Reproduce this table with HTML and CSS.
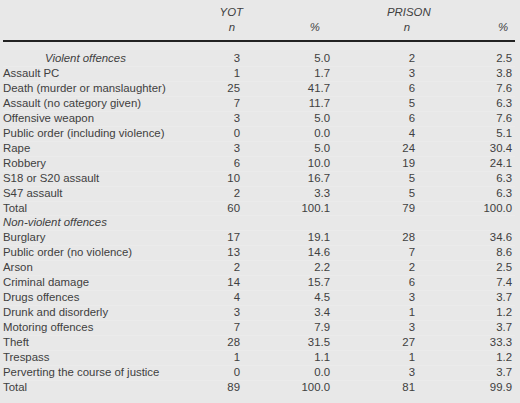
FILE: index.html
```html
<!doctype html>
<html lang="en">
<head>
	<meta charset="UTF-8">
	<title>Offences</title>
	<link rel="stylesheet" href="styles.css">
</head>
<body>
	<table class="tbl">
		<colgroup>
			<col class="c-label">
			<col class="c-n">
			<col class="c-p">
			<col class="c-n2">
			<col class="c-p2">
		</colgroup>
		<thead>
			<tr class="h1">
				<th></th>
				<th class="yot">YOT</th>
				<th></th>
				<th class="prison" colspan="2">PRISON</th>
			</tr>
			<tr class="h2">
				<th></th>
				<th class="hn">n</th>
				<th class="hp">%</th>
				<th class="hn">n</th>
				<th class="hp2">%</th>
			</tr>
		</thead>
		<tbody>
			<tr class="first"><td class="sub indent">Violent offences</td><td>3</td><td>5.0</td><td>2</td><td class="last">2.5</td></tr>
			<tr><td>Assault PC</td><td>1</td><td>1.7</td><td>3</td><td class="last">3.8</td></tr>
			<tr><td>Death (murder or manslaughter)</td><td>25</td><td>41.7</td><td>6</td><td class="last">7.6</td></tr>
			<tr><td>Assault (no category given)</td><td>7</td><td>11.7</td><td>5</td><td class="last">6.3</td></tr>
			<tr><td>Offensive weapon</td><td>3</td><td>5.0</td><td>6</td><td class="last">7.6</td></tr>
			<tr><td>Public order (including violence)</td><td>0</td><td>0.0</td><td>4</td><td class="last">5.1</td></tr>
			<tr><td>Rape</td><td>3</td><td>5.0</td><td>24</td><td class="last">30.4</td></tr>
			<tr><td>Robbery</td><td>6</td><td>10.0</td><td>19</td><td class="last">24.1</td></tr>
			<tr><td>S18 or S20 assault</td><td>10</td><td>16.7</td><td>5</td><td class="last">6.3</td></tr>
			<tr><td>S47 assault</td><td>2</td><td>3.3</td><td>5</td><td class="last">6.3</td></tr>
			<tr><td>Total</td><td>60</td><td>100.1</td><td>79</td><td class="last">100.0</td></tr>
			<tr><td class="sub">Non-violent offences</td><td></td><td></td><td></td><td class="last"></td></tr>
			<tr><td>Burglary</td><td>17</td><td>19.1</td><td>28</td><td class="last">34.6</td></tr>
			<tr><td>Public order (no violence)</td><td>13</td><td>14.6</td><td>7</td><td class="last">8.6</td></tr>
			<tr><td>Arson</td><td>2</td><td>2.2</td><td>2</td><td class="last">2.5</td></tr>
			<tr><td>Criminal damage</td><td>14</td><td>15.7</td><td>6</td><td class="last">7.4</td></tr>
			<tr><td>Drugs offences</td><td>4</td><td>4.5</td><td>3</td><td class="last">3.7</td></tr>
			<tr><td>Drunk and disorderly</td><td>3</td><td>3.4</td><td>1</td><td class="last">1.2</td></tr>
			<tr><td>Motoring offences</td><td>7</td><td>7.9</td><td>3</td><td class="last">3.7</td></tr>
			<tr><td>Theft</td><td>28</td><td>31.5</td><td>27</td><td class="last">33.3</td></tr>
			<tr><td>Trespass</td><td>1</td><td>1.1</td><td>1</td><td class="last">1.2</td></tr>
			<tr><td>Perverting the course of justice</td><td>0</td><td>0.0</td><td>3</td><td class="last">3.7</td></tr>
			<tr><td>Total</td><td>89</td><td>100.0</td><td>81</td><td class="last">99.9</td></tr>
		</tbody>
	</table>
</body>
</html>
```

FILE: styles.css
```css
html,body{
	margin: 0;
	padding: 0;
	background: #e8e8e8;
}
.tbl{
	border-collapse: collapse;
	table-layout: fixed;
	width: 512px;
	margin: 5px 0 0 3px;
	font-family: "Liberation Sans", Arial, sans-serif;
	font-size: 11.4px;
	color: #404040;
}
.c-label{ width: 167px; }
.c-n{ width: 73px; }
.c-p{ width: 90px; }
.c-n2{ width: 85px; }
.c-p2{ width: 97px; }
th{
	font-weight: normal;
	font-style: italic;
	padding: 0;
	height: 15px;
	line-height: 15px;
	text-align: right;
}
.h2 th{
	padding-bottom: 5px;
	border-bottom: 2px solid #222;
}
.yot{
	padding-right: 0;
}
.prison{
	text-align: left;
	padding-left: 54px;
}
.hn{ padding-right: 8px; }
.hp{ padding-right: 13px; }
.h2 .hp2{ padding-right: 7px; }
td{
	padding: 0 3px 0 0;
	height: 13.95px;
	line-height: 13.95px;
	text-align: right;
	white-space: nowrap;
	border-top: 1px solid rgba(255,255,255,0.15);
}
td:first-child{
	text-align: left;
	padding: 0;
}
td.last{ padding-right: 3px; }
.first td{
	padding-top: 10px;
	border-top: none;
}
.sub{ font-style: italic; }
.indent{ padding-left: 42px !important; }
```
